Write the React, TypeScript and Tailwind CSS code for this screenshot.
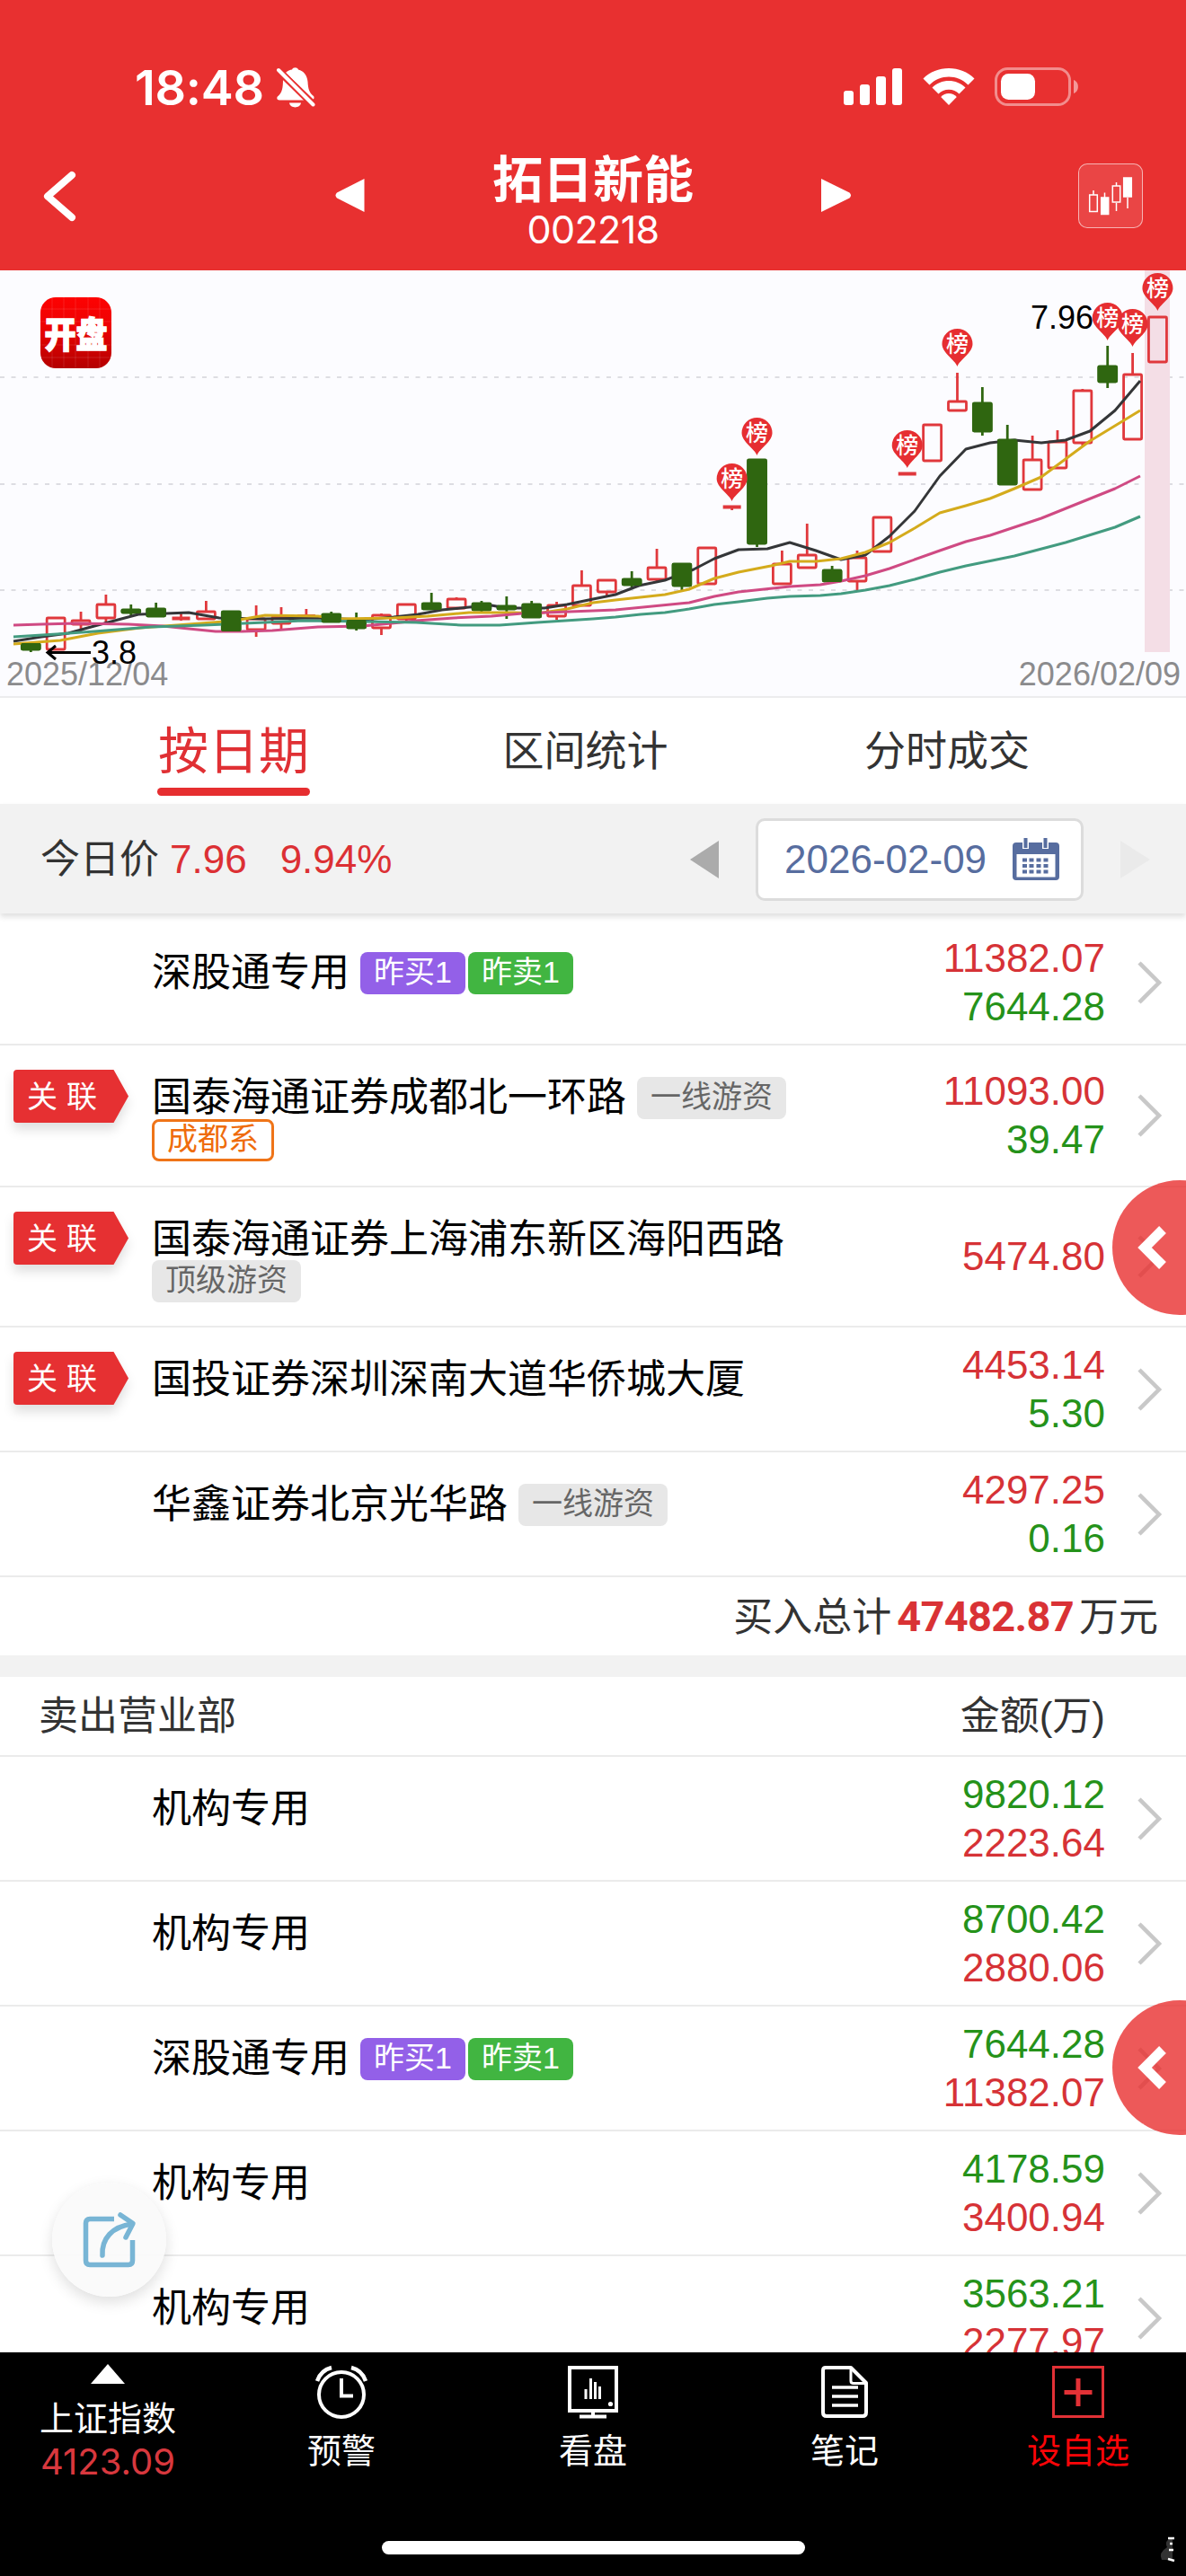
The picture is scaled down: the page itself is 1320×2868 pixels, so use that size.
type Candle = {
  up: boolean;
  high: number;
  top: number;
  bottom: number;
  low: number;
  pin?: number;
};

type Tag = { text: string; kind: "buy" | "sell" | "gray" | "orange" };

type Row = {
  name: string;
  tags?: Tag[];
  linked?: boolean;
  buy?: string;
  sell?: string;
  height?: string;
};

const c = (
  up: number,
  high: number,
  top: number,
  bottom: number,
  low: number,
  pin?: number
): Candle => ({ up: up === 1, high, top, bottom, low, pin });

const candles: Candle[] = [
  c(0, 415, 416, 422, 425),
  c(1, 386, 387, 422, 422),
  c(1, 380, 390, 394, 402),
  c(1, 361, 372, 387, 394),
  c(0, 372, 378, 381, 385),
  c(0, 370, 377, 385, 386),
  c(1, 382, 387, 388, 390),
  c(1, 368, 380, 388, 389),
  c(0, 379, 380, 401, 402),
  c(1, 373, 388, 400, 408),
  c(1, 375, 386, 393, 399),
  c(1, 377, 384, 386, 388),
  c(0, 380, 383, 391, 392),
  c(0, 381, 390, 398, 401),
  c(1, 382, 384, 398, 406),
  c(1, 371, 372, 388, 392),
  c(0, 359, 371, 377, 377),
  c(1, 364, 366, 376, 378),
  c(0, 368, 371, 378, 380),
  c(0, 363, 374, 377, 388),
  c(0, 368, 372, 386, 387),
  c(1, 369, 373, 385, 389),
  c(1, 334, 351, 373, 374),
  c(1, 344, 345, 358, 362),
  c(0, 335, 344, 350, 353),
  c(1, 310, 331, 344, 346),
  c(0, 327, 327, 351, 357),
  c(1, 309, 309, 349, 349),
  c(1, 262, 263, 264, 267, 257),
  c(0, 211, 211, 304, 308, 206),
  c(1, 312, 327, 349, 349),
  c(1, 282, 317, 331, 332),
  c(0, 329, 334, 346, 347),
  c(1, 312, 320, 346, 357),
  c(1, 275, 275, 313, 313),
  c(1, 226, 226, 227, 227, 220),
  c(1, 172, 172, 212, 212),
  c(1, 114, 146, 156, 156, 107),
  c(0, 130, 148, 179, 184),
  c(0, 172, 189, 238, 238),
  c(1, 184, 211, 244, 244),
  c(1, 178, 191, 220, 220),
  c(1, 132, 134, 192, 195),
  c(0, 84, 107, 124, 131, 78),
  c(1, 92, 116, 188, 188, 85),
  c(1, 51, 52, 102, 102, 45),
];

const averages = [
  {
    color: "#343638",
    points:
      "15,413 46,408 76,404 105,396 154,383 185,382 210,381 244,387 295,388 354,387 380,388 404,389 438,386 465,383 492,378 522,375 547,373 564,376 606,376 631,372 660,366 685,361 711,351 740,345 772,333 795,321 822,311 854,310 879,303 908,312 936,322 963,317 990,296 1018,268 1046,229 1075,199 1102,192 1129,189 1159,192 1186,189 1213,179 1241,156 1269,123",
  },
  {
    color: "#d4ab1c",
    points:
      "15,416 67,412 109,404 156,398 210,394 261,390 295,384 354,385 379,388 438,387 476,385 522,381 572,381 598,382 631,377 660,370 685,367 740,361 767,355 795,343 822,336 858,329 879,324 908,324 936,321 963,314 990,303 1018,287 1046,270 1075,262 1102,254 1129,243 1159,230 1186,210 1213,190 1269,156",
  },
  {
    color: "#cf4a83",
    points:
      "15,395 46,394 84,393 143,394 181,396 210,399 240,402 269,402 303,401 354,397 404,396 446,392 463,390 505,387 547,385 581,382 660,379 685,378 767,370 795,363 822,358 879,352 913,350 936,346 963,340 990,332 1046,312 1075,302 1102,295 1159,276 1241,243 1269,229",
  },
  {
    color: "#439b80",
    points:
      "15,408 63,405 105,402 168,397 227,395 295,392 337,390 404,391 463,392 513,395 556,395 598,392 660,388 685,386 713,383 740,381 767,377 795,372 822,369 854,365 879,363 913,362 936,360 963,356 990,351 1018,344 1046,336 1075,329 1129,318 1186,303 1241,286 1269,274",
  },
];

const buyRows: Row[] = [
  {
    name: "深股通专用",
    tags: [
      { text: "昨买1", kind: "buy" },
      { text: "昨卖1", kind: "sell" },
    ],
    buy: "11382.07",
    sell: "7644.28",
  },
  {
    name: "国泰海通证券成都北一环路",
    tags: [
      { text: "一线游资", kind: "gray" },
      { text: "成都系", kind: "orange" },
    ],
    linked: true,
    buy: "11093.00",
    sell: "39.47",
    height: "h-[158px]",
  },
  {
    name: "国泰海通证券上海浦东新区海阳西路",
    tags: [{ text: "顶级游资", kind: "gray" }],
    linked: true,
    buy: "5474.80",
    height: "h-[156px]",
  },
  {
    name: "国投证券深圳深南大道华侨城大厦",
    linked: true,
    buy: "4453.14",
    sell: "5.30",
  },
  {
    name: "华鑫证券北京光华路",
    tags: [{ text: "一线游资", kind: "gray" }],
    buy: "4297.25",
    sell: "0.16",
  },
];

const sellRows: Row[] = [
  { name: "机构专用", buy: "2223.64", sell: "9820.12" },
  { name: "机构专用", buy: "2880.06", sell: "8700.42" },
  {
    name: "深股通专用",
    tags: [
      { text: "昨买1", kind: "buy" },
      { text: "昨卖1", kind: "sell" },
    ],
    buy: "11382.07",
    sell: "7644.28",
  },
  { name: "机构专用", buy: "3400.94", sell: "4178.59" },
  { name: "机构专用", buy: "2277.97", sell: "3563.21" },
];

const tagStyles = {
  buy: "bg-[#9360e8] text-white px-[15px]",
  sell: "bg-[#41b541] text-white px-[15px]",
  gray: "bg-[#e7e7e7] text-[#666] px-[15px]",
  orange: "border-[3px] border-[#ef7418] text-[#ef6c0c] px-[14px]",
};

const StatusBar = () => (
  <div className="flex h-[150px] items-start pt-[70px] pl-[150px] pr-[119px]">
    <span className="h-[54px] w-[145px] font-['Inter'] text-[54px] leading-[56px] font-semibold tracking-[-0.3px] whitespace-nowrap">
      18:48
    </span>
    <svg className="ml-[12px] mt-[4px]" width="44" height="48" viewBox="0 0 44 48" fill="#fff">
      <path d="M11 7C13 4.500 16 3.700 18 3.500C19 .5 24 .5 25 3.500C31 5 35 10 35.500 17C36 25 37 29 42 33C43 34.500 42.500 36 41.500 36.500Z" />
      <path d="M8 14.500L32 37.500H4C1 37.500 .5 34.500 2.500 33C7 29 8 24 8 14.500Z" />
      <path d="M15 40.500H28C27 47 16 47 15 40.500Z" />
      <path d="M2.500 4L42 43" stroke="#e83030" strokeWidth="8" />
      <path d="M3 4L41.500 42.500" stroke="#fff" strokeWidth="4" strokeLinecap="round" />
    </svg>
    <div className="ml-auto flex h-[48px] items-end gap-[7px] pb-[1px]">
      <div className="h-[16px] w-[11px] rounded-[3px] bg-white" />
      <div className="h-[23px] w-[11px] rounded-[3px] bg-white" />
      <div className="h-[32px] w-[11px] rounded-[3px] bg-white" />
      <div className="h-[41px] w-[11px] rounded-[3px] bg-white" />
    </div>
    <svg className="ml-[22px] mt-[5px]" width="60" height="43" viewBox="0 0 60 43" fill="#fff">
      <path d="M30 1C41 1 51 5 58.500 12.500L51.500 19.500C45.500 13.500 38 10.500 30 10.500S14.500 13.500 8.500 19.500L1.500 12.500C9 5 19 1 30 1Z" />
      <path d="M30 15C37 15 43.500 17.500 48.500 22.500L41.500 29.500C38.500 26.500 34.500 24.700 30 24.700S21.500 26.500 18.500 29.500L11.500 22.500C16.500 17.500 23 15 30 15Z" />
      <path d="M30 29C33.500 29 36.500 30.500 38.800 33L30 42L21.200 33C23.500 30.500 26.500 29 30 29Z" />
    </svg>
    <svg className="ml-[21px] mt-[5px]" width="94" height="43" viewBox="0 0 94 43">
      <rect x="1.500" y="1.500" width="82" height="40" rx="13" fill="none" stroke="#fff" strokeOpacity=".45" strokeWidth="3" />
      <rect x="7" y="7" width="38" height="29" rx="8.500" fill="#fff" />
      <path d="M88 14C94.500 16 94.500 27 88 29Z" fill="#fff" fillOpacity=".5" />
    </svg>
  </div>
);

const TitleBar = () => (
  <div className="flex h-[151px] items-start px-12">
    <svg className="mt-[40px]" width="38" height="58" viewBox="0 0 38 58" fill="none">
      <path d="M32 5L5 28.500L32 52" stroke="#fff" strokeWidth="8" strokeLinecap="round" strokeLinejoin="round" />
    </svg>
    <svg className="ml-[287px] mt-[48px]" width="33" height="40" viewBox="0 0 33 40" fill="#fff">
      <path d="M32.500 1V38L2 22.500Q-1 19.500 2 16.500Z" />
    </svg>
    <div className="flex w-[508px] flex-col items-center">
      <h1 className="mt-[15px] text-[56px] leading-[72px] font-bold">拓日新能</h1>
      <span className="-mt-[3px] font-['Inter'] text-[43px] leading-[42px] tracking-[-0.6px]">002218</span>
    </div>
    <svg className="mt-[48px]" width="34" height="40" viewBox="0 0 34 40" fill="#fff">
      <path d="M0 1V38L31.500 22.500Q34.500 19.500 31.500 16.500Z" />
    </svg>
    <div className="ml-auto mt-[32px] h-[72px] w-[72px] rounded-[10px] border border-white/60 bg-white/10">
      <svg width="70" height="70" viewBox="0 0 70 70" stroke="#fff" strokeWidth="1.500" fill="none">
        <path d="M16 29V34M28.500 31.500V37M41.500 20V24M41.500 43V52M54 37V49" />
        <rect x="11.700" y="34" width="8.600" height="18.500" />
        <rect x="24.700" y="37" width="8" height="18.500" fill="#fff" />
        <rect x="37.300" y="24" width="8.400" height="18" />
        <rect x="49.700" y="15" width="8.600" height="21" fill="#fff" />
      </svg>
    </div>
  </div>
);

const Pin = ({ x, tip }: { x: number; tip: number }) => (
  <g transform={`translate(${x} ${tip})`}>
    <path d="M0 0C-3 -8 -17 -15 -17 -25A17 17 0 0 1 17 -25C17 -15 3 -8 0 0Z" fill="#e62e31" />
    <text y="-16" fontSize="25" fill="#fff" fontWeight="500" textAnchor="middle">
      榜
    </text>
  </g>
);

const KLineChart = () => (
  <div className="h-[476px] border-b-2 border-[#ececee] bg-[#fcfcff]">
    <svg width="1320" height="474" viewBox="0 0 1320 474">
      <defs>
        <linearGradient id="logo" x1="0" y1="0" x2="0" y2="1">
          <stop offset="0" stopColor="#fd0202" />
          <stop offset="0.4" stopColor="#ee0303" />
          <stop offset="1" stopColor="#b40000" />
        </linearGradient>
      </defs>
      {[119, 238, 356].map((y) => (
        <line key={y} x1="0" x2="1320" y1={y} y2={y} stroke="#dddde2" strokeWidth="2" strokeDasharray="5 7.500" />
      ))}
      <rect x="1274" y="0" width="28" height="425" fill="#f4dee6" />

      {/* brand mark */}
      <rect x="45" y="30" width="79" height="79" rx="17" fill="url(#logo)" />
      <path d="M45 43H124M45 57H124M45 83H124M45 97H124M58 30V109M71 30V109M84 30V109M98 30V109M111 30V109" stroke="#fff" strokeOpacity=".12" />
      <text transform="translate(84.500 86) scale(1 1.150)" fontSize="35" fontWeight="900" fill="#fff" stroke="#fff" strokeWidth="1.200" textAnchor="middle">
        开盘
      </text>

      {candles.map((k, i) => {
        const x = 34.300 + i * 27.87;
        const color = k.up ? "#e0383c" : "#2f6610";
        const h = k.bottom - k.top;
        return (
          <g key={i} stroke={color} strokeWidth="2.800">
            <line x1={x} x2={x} y1={k.high} y2={k.top} />
            <line x1={x} x2={x} y1={k.bottom} y2={k.low} />
            {h <= 2 ? (
              <line x1={x - 10} x2={x + 10} y1={k.top + h / 2} y2={k.top + h / 2} strokeWidth="4" />
            ) : (
              <rect x={x - 10} y={k.top} width="20" height={h} rx="1" fill={k.up ? "none" : color} />
            )}
          </g>
        );
      })}
      {averages.map((line) => (
        <polyline key={line.color} points={line.points} fill="none" stroke={line.color} strokeWidth="3" strokeLinejoin="round" />
      ))}
      {/* candle bodies that fell stay on top of the averages */}
      {candles.map((k, i) =>
        !k.up ? (
          <rect key={i} x={34.300 + i * 27.87 - 11} y={k.top - 1} width="22" height={k.bottom - k.top + 2} rx="1.500" fill="#2f6610" />
        ) : null
      )}
      <g fontFamily="Liberation Sans" fontSize="36">
        <text x="1147" y="65">7.96</text>
        <text x="7" y="462" fill="#8b8b8d">2025/12/04</text>
        <text x="1314" y="462" fill="#8b8b8d" textAnchor="end">2026/02/09</text>
        <text x="102" y="438">3.8</text>
      </g>
      <path d="M53 425.500H101M62 418L53 425.500L62 433" fill="none" stroke="#000" strokeWidth="3" />
      {candles.map((k, i) => (k.pin ? <Pin key={i} x={34.300 + i * 27.87} tip={k.pin} /> : null))}
    </svg>
  </div>
);

const Tabs = () => (
  <div className="flex h-[118px] items-start justify-between px-[175px] text-[46px] text-[#333]">
    <div className="flex flex-col items-center">
      <span className="mt-[22px] text-[56px] leading-[76px] text-[#e03034]">按日期</span>
      <div className="mt-[2px] h-[9px] w-[170px] rounded-full bg-[#e62e30]" />
    </div>
    <span className="mt-[25px] -ml-[4px] leading-[68px]">区间统计</span>
    <span className="mt-[25px] -mr-[1px] leading-[68px]">分时成交</span>
  </div>
);

const CalendarIcon = () => (
  <svg width="52" height="48" viewBox="0 0 52 48" fill="#576d9f">
    <path d="M4 5H48Q52 5 52 9V43Q52 47 48 47H4Q0 47 0 43V9Q0 5 4 5Z" />
    <path d="M4.500 18H47.500V43.500H4.500Z" fill="#fff" />
    <path d="M11 0H18V12H11ZM33 0H40V12H33Z" fill="#fff" />
    <path d="M12.500 0H16.500V11H12.500ZM34.500 0H38.500V11H34.500Z" />
    {[22.5, 29, 35.5].map((y) =>
      [11, 18.5, 26.5, 34.5].map((x) => <rect key={`${x}-${y}`} x={x} y={y} width="5" height="4" />)
    )}
  </svg>
);

const PriceBar = () => (
  <div className="relative z-10 flex h-[122px] items-center bg-[#f2f2f2] pt-[2px] pl-[45px] text-[44px] shadow-[0_4px_6px_rgba(0,0,0,0.12)]">
    <span className="text-[#333]">今日价</span>
    <span className="ml-[12px] text-[#dc3034]">7.96</span>
    <span className="ml-[37px] text-[#dc3034]">9.94%</span>
    <div className="ml-auto h-0 w-0 border-y-[21px] border-r-[32px] border-y-transparent border-r-[#ababab]" />
    <div className="ml-[41px] flex h-[92px] w-[365px] items-center rounded-[10px] border-[3px] border-[#dcdcdc] bg-white pl-[29px] text-[#576d9f]">
      <span className="mr-[29px] whitespace-nowrap">2026-02-09</span>
      <CalendarIcon />
    </div>
    <div className="mr-[40px] ml-[41px] h-0 w-0 border-y-[21px] border-l-[33px] border-y-transparent border-l-[#eaeaea]" />
  </div>
);

const LinkedBadge = () => (
  <svg className="absolute top-[15px] left-[5px]" width="160" height="90" viewBox="0 0 160 90">
    <path
      className="drop-shadow-[0_8px_6px_rgba(0,0,0,0.12)]"
      d="M14 12H121.500L138 41.500L121.500 71H14Q10 71 10 67V16Q10 12 14 12Z"
      fill="#e63032"
    />
    <text x="25" y="54" fontSize="34" fill="#fff" letterSpacing="10">
      关联
    </text>
  </svg>
);

const ListRow = ({ row, selling }: { row: Row; selling?: boolean }) => {
  const amounts = selling ? [row.sell, row.buy] : [row.buy, row.sell];
  const colors = selling ? ["text-[#25921a]", "text-[#d63236]"] : ["text-[#d63236]", "text-[#25921a]"];
  return (
    <div className={`relative flex shrink-0 border-b-2 border-[#ebebeb] pl-[169px] ${row.height ?? "h-[139px]"}`}>
      {row.linked && <LinkedBadge />}
      <div className="flex w-[800px] flex-wrap content-start pt-[35px]">
        <span className="mr-[12px] h-[46px] text-[44px] leading-[45px] whitespace-nowrap text-black">{row.name}</span>
        {row.tags?.map((tag) => (
          <span
            key={tag.text}
            className={`mr-[3px] flex h-[47px] items-center rounded-[8px] text-[34px] leading-none whitespace-nowrap ${tagStyles[tag.kind]}`}
          >
            <span className="-mt-[3px]">{tag.text}</span>
          </span>
        ))}
      </div>
      <div className="flex flex-1 flex-col items-end justify-center text-[44px] leading-[54px]">
        {amounts.map((value, i) => value && <span key={i} className={colors[i]}>{value}</span>)}
      </div>
      <svg className="mr-[26px] ml-[36px] self-center" width="28" height="48" viewBox="0 0 28 48" fill="none">
        <path d="M2 2L24 24L2 46" stroke="#c8c8c8" strokeWidth="4.500" />
      </svg>
    </div>
  );
};

const SideButton = ({ top }: { top: string }) => (
  <div className={`absolute right-0 z-20 h-[150px] w-[82px] overflow-hidden ${top}`}>
    <div className="flex h-[150px] w-[150px] items-center rounded-full bg-[#e83030]/80 pl-[28px]">
      <svg width="34" height="50" viewBox="0 0 34 50" fill="none">
        <path d="M28 5L8 25L28 45" stroke="#fff" strokeWidth="11" />
      </svg>
    </div>
  </div>
);

const ShareButton = () => (
  <div className="absolute top-[2430px] left-[58px] z-20 flex h-[127px] w-[127px] items-center justify-center rounded-full bg-[#fafafa]/95 shadow-[0_6px_16px_rgba(0,0,0,0.13)]">
    <svg width="60" height="64" viewBox="0 0 60 64" fill="none" stroke="#78b5d5" strokeWidth="5.500">
      <path d="M35 8.500H8Q3.500 8.500 3.500 13V55Q3.500 59.500 8 59.500H51Q55.500 59.500 55.500 55V32" />
      <path d="M22 49C21 30 33 17 55 14" strokeLinecap="round" />
      <path d="M42 4L56 13.500L48 29" strokeLinecap="round" strokeLinejoin="round" />
    </svg>
  </div>
);

const AlarmIcon = () => (
  <svg width="58" height="60" viewBox="0 0 58 60" fill="none" stroke="#fff" strokeWidth="4">
    <circle cx="29" cy="33" r="25" />
    <path d="M2 18Q6 6 18 3M56 18Q52 6 40 3" strokeWidth="4.500" />
    <path d="M29 15V34.500H42" />
  </svg>
);

const MonitorIcon = () => (
  <svg width="58" height="60" viewBox="0 0 58 60" fill="none" stroke="#fff" strokeWidth="4">
    <rect x="3" y="3" width="52" height="48" />
    <path d="M21 38V27M26.500 38V15M31.500 38V19M36.500 38V24" strokeWidth="3" />
    <path d="M29 51V57M14 57.500H44" strokeWidth="4" />
    <circle cx="48.500" cy="43.500" r="2.600" fill="#fff" stroke="none" />
  </svg>
);

const NoteIcon = () => (
  <svg width="58" height="60" viewBox="0 0 58 60" fill="none" stroke="#fff" strokeWidth="4" strokeLinejoin="round">
    <path d="M7 3H36L53 20V53Q53 57 49 57H9Q5 57 5 53V6Q5 3 8 3Z" />
    <path d="M36 3V18Q36 20.500 39 20.500H53" strokeWidth="3" />
    <path d="M15 25H44M15 35H44M15 45H44" strokeWidth="3.500" />
  </svg>
);

const AddIcon = () => (
  <svg width="58" height="60" viewBox="0 0 58 60" fill="none" stroke="#e23136">
    <rect x="1.500" y="2.500" width="55" height="55" strokeWidth="3" />
    <path d="M29 15V46M13.500 30.500H44.500" strokeWidth="5" />
  </svg>
);

const navItems = [
  { label: "预警", icon: <AlarmIcon />, style: "w-[280px]" },
  { label: "看盘", icon: <MonitorIcon />, style: "w-[280px]" },
  { label: "笔记", icon: <NoteIcon />, style: "w-[280px]" },
  { label: "设自选", icon: <AddIcon />, style: "w-[240px] text-[#fb0508]" },
];

const BottomBar = () => (
  <div className="relative h-[249px] bg-black text-[38px] text-white">
    <div className="flex items-start">
      <div className="flex w-[240px] flex-col items-center">
        <div className="mt-[13px] h-0 w-0 border-x-[19px] border-b-[22px] border-x-transparent border-b-white" />
        <span className="mt-[16px] leading-[46px]">上证指数</span>
        <span className="mt-[5px] font-['Inter'] text-[40px] leading-[40px] tracking-[0px] text-[#d8383e]">4123.09</span>
      </div>
      {navItems.map((item) => (
        <div key={item.label} className={`flex flex-col items-center pt-[14px] ${item.style}`}>
          {item.icon}
          <span className="mt-[13px] leading-[46px]">{item.label}</span>
        </div>
      ))}
    </div>
    <div className="absolute bottom-[24px] left-[425px] h-[15px] w-[471px] rounded-full bg-white" />
    <svg className="absolute right-[11px] bottom-[14px]" width="24" height="32" viewBox="0 0 24 32" fill="none">
      <path d="M20 4Q10 6 14 14Q4 20 8 28H20Z" fill="#333" />
      <path d="M15 4H22M17 10H20M16 17H21M15 27L22 29" stroke="#fff" strokeWidth="2.500" />
    </svg>
  </div>
);

const App = () => {
  return (
    <div className="relative flex h-[2868px] w-[1320px] flex-col overflow-hidden bg-white font-['Liberation_Sans','Noto_Sans_CJK_SC',sans-serif]">
      <header className="h-[301px] shrink-0 bg-[#e83030] text-white">
        <StatusBar />
        <TitleBar />
      </header>
      <KLineChart />
      <Tabs />
      <PriceBar />

      <main className="flex h-[1602px] flex-col overflow-hidden pt-[8px]">
        {buyRows.map((row) => (
          <ListRow key={row.name} row={row} />
        ))}
        <div className="flex h-[87px] shrink-0 items-center justify-end pt-[2px] pr-[31px] text-[44px] text-[#333]">
          <span>买入总计</span>
          <span className="mr-[6px] ml-[6px] font-['Roboto'] text-[47px] font-bold tracking-[-0.7px] text-[#d93235]">47482.87</span>
          <span>万元</span>
        </div>
        <div className="h-[24px] shrink-0 bg-[#f2f2f2]" />
        <div className="flex h-[89px] shrink-0 items-center justify-between border-b-2 border-[#ebebeb] pr-[90px] pl-[43px] text-[44px] text-[#333]">
          <span>卖出营业部</span>
          <span>金额(万)</span>
        </div>
        {sellRows.map((row, i) => (
          <ListRow key={i} row={row} selling />
        ))}
      </main>

      <BottomBar />

      <SideButton top="top-[1314px]" />
      <SideButton top="top-[2227px]" />
      <ShareButton />
    </div>
  );
};

export default App;
